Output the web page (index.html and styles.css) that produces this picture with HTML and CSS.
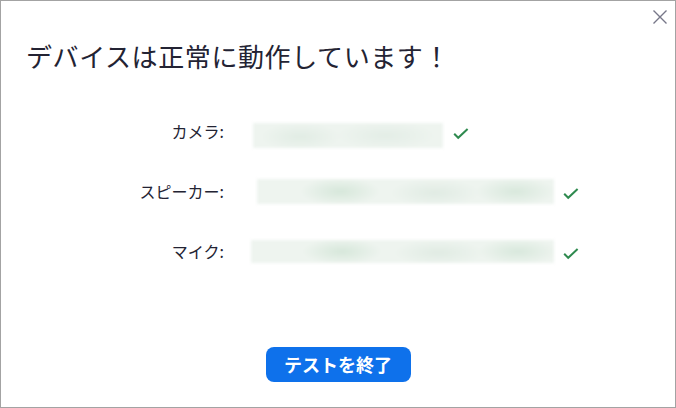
FILE: index.html
```html
<!DOCTYPE html>
<html lang="ja">
<head>
<meta charset="utf-8">
<title>デバイステスト</title>
<link rel="stylesheet" href="styles.css">
</head>
<body>
<div class="window">
  <button class="close" aria-label="閉じる">
    <svg width="16" height="16" viewBox="0 0 16 16"><path d="M1.5 1.5 L14.5 14.5 M14.5 1.5 L1.5 14.5" stroke="#777789" stroke-width="1.4" fill="none"/></svg>
  </button>
  <h1 class="title">デバイスは正常に動作しています！</h1>
  <div class="rows">
    <div class="row">
      <span class="label">カメラ:</span>
      <span class="blur blur-camera"></span>
      <svg class="check check-camera" width="16" height="12" viewBox="0 0 16 12"><path d="M1.2 5.8 L5.2 9.8 L14.6 1" stroke="#2f8a4f" stroke-width="2" fill="none"/></svg>
    </div>
    <div class="row">
      <span class="label">スピーカー:</span>
      <span class="blur blur-speaker"></span>
      <svg class="check" width="16" height="12" viewBox="0 0 16 12"><path d="M1.2 5.8 L5.2 9.8 L14.6 1" stroke="#2f8a4f" stroke-width="2" fill="none"/></svg>
    </div>
    <div class="row">
      <span class="label">マイク:</span>
      <span class="blur blur-mic"></span>
      <svg class="check" width="16" height="12" viewBox="0 0 16 12"><path d="M1.2 5.8 L5.2 9.8 L14.6 1" stroke="#2f8a4f" stroke-width="2" fill="none"/></svg>
    </div>
  </div>
  <div class="footer">
    <button class="end-btn">テストを終了</button>
  </div>
</div>
</body>
</html>
```

FILE: styles.css
```css
* { box-sizing: border-box; }
html, body { margin: 0; padding: 0; background: #ffffff; }
body { font-family: "Noto Sans CJK JP", "Noto Sans", sans-serif; color: #232333; }

.window {
  position: relative;
  width: 676px;
  height: 408px;
  border: 1px solid #a3a3a3;
  background: #ffffff;
  display: flex;
  flex-direction: column;
}

.close {
  position: absolute;
  top: 8px;
  right: 7px;
  width: 16px;
  height: 16px;
  padding: 0;
  border: 0;
  background: transparent;
  display: flex;
}

.title {
  margin: 37px 0 0 25px;
  font-size: 26px;
  font-weight: 400;
  line-height: 36px;
  letter-spacing: 0.6px;
  color: #232333;
}

.rows {
  margin-top: 27px;
  display: flex;
  flex-direction: column;
}

.row {
  height: 60px;
  display: flex;
  align-items: center;
}

.label {
  width: 223px;
  text-align: right;
  font-size: 16px;
  line-height: 20px;
  color: #232333;
}

.blur {
  display: block;
  height: 25px;
  filter: blur(1.5px);
  background-color: #eef4ef;
}

.blur-camera {
  width: 190px;
  margin: 9px 0 0 29px;
  background-image:
    radial-gradient(ellipse 40px 14px at 25% 55%, #e1ece4, transparent),
    radial-gradient(ellipse 50px 14px at 70% 50%, #e3ede6, transparent);
}

.blur-speaker {
  width: 297px;
  margin-left: 33px;
  background-image:
    radial-gradient(ellipse 40px 14px at 28% 50%, #d6e7da, transparent),
    radial-gradient(ellipse 45px 14px at 60% 55%, #e0ebe3, transparent),
    radial-gradient(ellipse 40px 14px at 87% 50%, #d8e8dc, transparent);
}

.blur-mic {
  width: 303px;
  height: 23px;
  margin-left: 27px;
  background-image:
    radial-gradient(ellipse 40px 13px at 30% 50%, #d6e7da, transparent),
    radial-gradient(ellipse 45px 13px at 62% 55%, #e0ebe3, transparent),
    radial-gradient(ellipse 40px 13px at 88% 50%, #d8e8dc, transparent);
}

.check {
  flex: none;
  margin: 6px 0 0 9px;
}

.check-camera { margin-left: 10px; }

.footer {
  margin-top: auto;
  margin-bottom: 25px;
  display: flex;
  justify-content: center;
}

.end-btn {
  width: 145px;
  height: 35px;
  border: 0;
  border-radius: 8px;
  background: #0e71eb;
  color: #ffffff;
  font-family: "Noto Sans CJK JP", "Noto Sans", sans-serif;
  font-size: 18px;
  font-weight: 700;
  line-height: 24px;
  padding: 0 0 2px;
}
```
